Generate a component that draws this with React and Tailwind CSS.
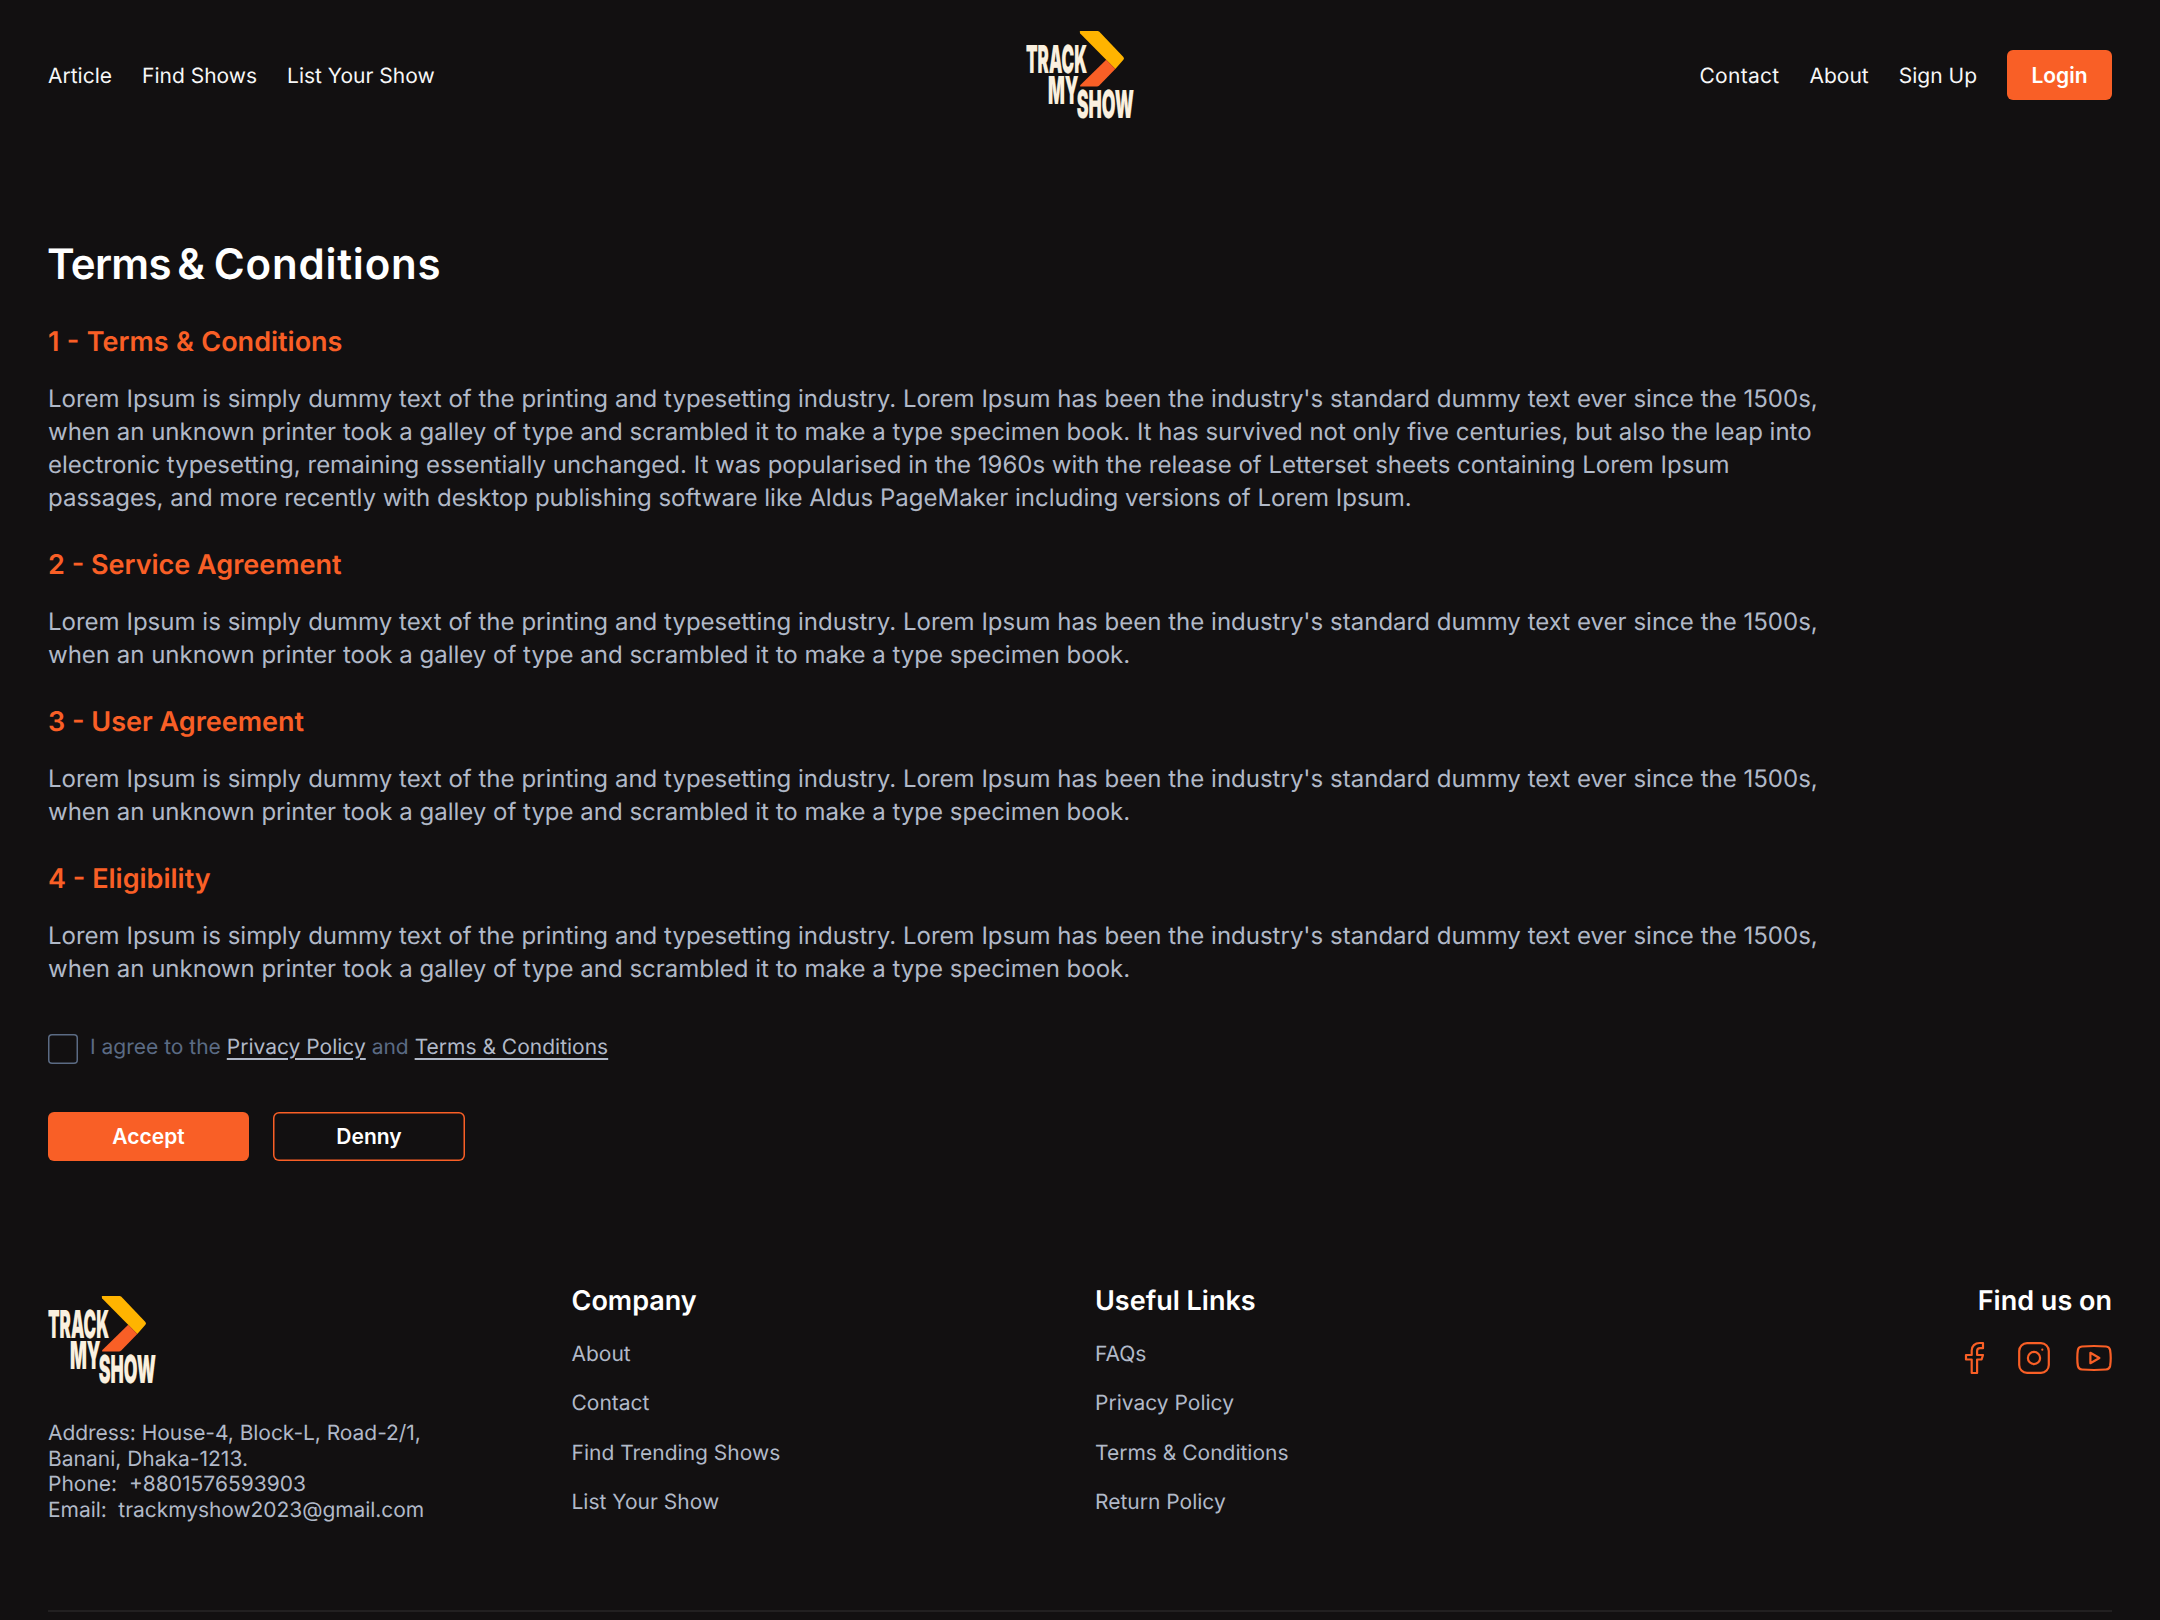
import React from "react";

const INTRO =
  "Lorem Ipsum is simply dummy text of the printing and typesetting industry. Lorem Ipsum has been the industry's standard dummy text ever since the 1500s, when an unknown printer took a galley of type and scrambled it to make a type specimen book.";

const SECTIONS = [
  {
    title: "1 - Terms & Conditions",
    body:
      INTRO +
      " It has survived not only five centuries, but also the leap into electronic typesetting, remaining essentially unchanged. It was popularised in the 1960s with the release of Letterset sheets containing Lorem Ipsum passages, and more recently with desktop publishing software like Aldus PageMaker including versions of Lorem Ipsum.",
  },
  { title: "2 - Service Agreement", body: INTRO },
  { title: "3 - User Agreement", body: INTRO },
  { title: "4 - Eligibility", body: INTRO },
];

function Logo() {
  const word = {
    fill: "#faf0df",
    stroke: "#faf0df",
    strokeWidth: 0.2,
    fontFamily: "Inter, sans-serif",
    fontWeight: 900,
    fontSize: 38.5,
    lengthAdjust: "spacingAndGlyphs",
  };
  return (
    <svg width="108" height="88" viewBox="0 0 108 88" className="block shrink-0 overflow-visible">
      <path d="M54.3 0H71.5Q72.6 0 73.4 .8L97.4 26Q98.6 27.4 97.4 28.8L89.3 38L54.2 2.4Q53.2 0 54.3 0Z" fill="#ffb400" />
      <path d="M80.2 28.8L89.3 38L73 54.8Q72.2 55.6 71 55.6H54.8Q53.2 55.6 54.4 54Z" fill="#f95f26" />
      <text x="0" y="42" textLength="61" {...word}>TRACK</text>
      <text x="22" y="73" textLength="30.5" {...word}>MY</text>
      <text x="50.8" y="87.2" textLength="57" {...word}>SHOW</text>
    </svg>
  );
}

function Social() {
  const icon = {
    width: 36,
    height: 36,
    viewBox: "0 0 36 36",
    fill: "none",
    stroke: "#f95f26",
    strokeWidth: 2.2,
    strokeLinejoin: "round",
  };
  return (
    <div className="mt-[23px] flex gap-6">
      <svg {...icon}>
        <path d="M27 3H23.5C19 3 15.7 6.2 15.7 10.5V15H10V19.5H15.7V33H21.1V19.5H25.6L27 15H21.1V11C21.1 9.4 22.3 8.2 24 8.2H27V3Z" />
      </svg>
      <svg {...icon}>
        <rect x="3.2" y="3.2" width="29.6" height="29.6" rx="7.8" />
        <circle cx="18" cy="18" r="6.1" />
        <circle cx="26.3" cy="9.7" r="1.1" fill="#f95f26" stroke="none" />
      </svg>
      <svg {...icon}>
        <path d="M1.3 18C1.3 14.5 1.5 12 1.9 10C2.3 7.8 3.8 6.7 5.9 6.5C13.5 5.9 22.5 5.9 30.1 6.5C32.2 6.7 33.7 7.8 34.1 10C34.8 14.5 34.8 21.5 34.1 26C33.7 28.2 32.2 29.3 30.1 29.5C22.5 30.1 13.5 30.1 5.9 29.5C3.8 29.3 2.3 28.2 1.9 26C1.5 24 1.3 21.5 1.3 18Z" />
        <path d="M14.4 12.8L23.4 18L14.4 23.2Z" />
      </svg>
    </div>
  );
}

function FooterColumn({ title, links }) {
  return (
    <div>
      <h3 className="text-[27px] leading-[33px] font-semibold text-white">{title}</h3>
      <ul className="mt-[25px] flex flex-col gap-6 text-[21px] leading-[25.5px]">
        {links.map((l) => (
          <li key={l}>{l}</li>
        ))}
      </ul>
    </div>
  );
}

export default function App() {
  return (
    <div className="h-[1620px] w-[2160px] overflow-hidden bg-[#121011] px-12 font-['Inter',sans-serif] text-[#b1b9c8] antialiased [text-rendering:geometricPrecision]">
      <header className="grid h-[150px] grid-cols-[1fr_auto_1fr] items-center text-[21px] leading-[25.5px] text-[#f7f7f7]">
        <nav className="flex gap-[30px] pt-[3px]">
          <a>Article</a>
          <a>Find Shows</a>
          <a>List Your Show</a>
        </nav>
        <Logo />
        <nav className="flex items-center justify-end gap-[30px]">
          <a className="pt-[3px] tracking-[0.3px]">Contact</a>
          <a className="pt-[3px]">About</a>
          <a className="pt-[3px]">Sign Up</a>
          <button className="h-[49.5px] w-[105px] rounded-md bg-[#f95f26] pt-0.5 font-semibold text-white">Login</button>
        </nav>
      </header>

      <main className="mt-[88px]">
        <h1 className="text-[42px] leading-[54px] font-semibold [word-spacing:-5px] text-white">
          <span className="-ml-px tracking-[-0.7px]">Terms</span>{" "}
          <span className="ml-px tracking-[3px]">&amp;</span>{" "}
          <span className="tracking-[0.8px]">Conditions</span>
        </h1>
        <div className="mt-[33px] flex w-[1780px] flex-col gap-[34px]">
          {SECTIONS.map((s) => (
            <section key={s.title} className="group">
              <h2 className="text-[27px] leading-[33px] font-semibold text-[#f95f26] group-first:[word-spacing:0.6px]">{s.title}</h2>
              <p className="mt-6 text-2xl leading-[33px] first-line:[word-spacing:0.1px]">{s.body}</p>
            </section>
          ))}
        </div>
        <label className="mt-[48.5px] flex items-start gap-3 text-[21px] leading-[27px] text-[#5b6b84]">
          <i className="size-[30px] rounded shadow-[inset_0_0_0_1.5px_#5b6b84]" />
          <p>
            I agree to the{" "}
            <a className="text-[#b1b9c8] underline underline-offset-4">Privacy Policy</a> and{" "}
            <a className="text-[#b1b9c8] underline underline-offset-4">Terms &amp; Conditions</a>
          </p>
        </label>
        <div className="mt-12 flex gap-6 text-[21px] font-semibold text-white">
          <button className="h-[49.5px] w-[201px] rounded-md bg-[#f95f26]">Accept</button>
          <button className="h-[49.5px] w-48 rounded-md shadow-[inset_0_0_0_1.5px_#f95f26]">Denny</button>
        </div>
      </main>

      <footer className="mt-[122.5px] border-b-2 border-[#222021] pb-[87px]">
        <div className="grid grid-cols-4 gap-[30px]">
          <div className="pt-[12.5px]">
            <Logo />
            <address className="mt-[37px] text-[21px] leading-[25.5px] whitespace-pre not-italic">
              <div className="tracking-[-0.05px]">Address: House-4, Block-L, Road-2/1,</div>
              <div>Banani, Dhaka-1213.</div>
              <div>{"Phone:  +8801576593903"}</div>
              <div className="tracking-[-0.06px]">{"Email:  trackmyshow2023@gmail.com"}</div>
            </address>
          </div>
          <FooterColumn title="Company" links={["About", "Contact", "Find Trending Shows", "List Your Show"]} />
          <FooterColumn title="Useful Links" links={["FAQs", "Privacy Policy", "Terms & Conditions", "Return Policy"]} />
          <div className="flex flex-col items-end">
            <h3 className="text-[27px] leading-[33px] font-semibold text-white">Find us on</h3>
            <Social />
          </div>
        </div>
      </footer>
    </div>
  );
}
